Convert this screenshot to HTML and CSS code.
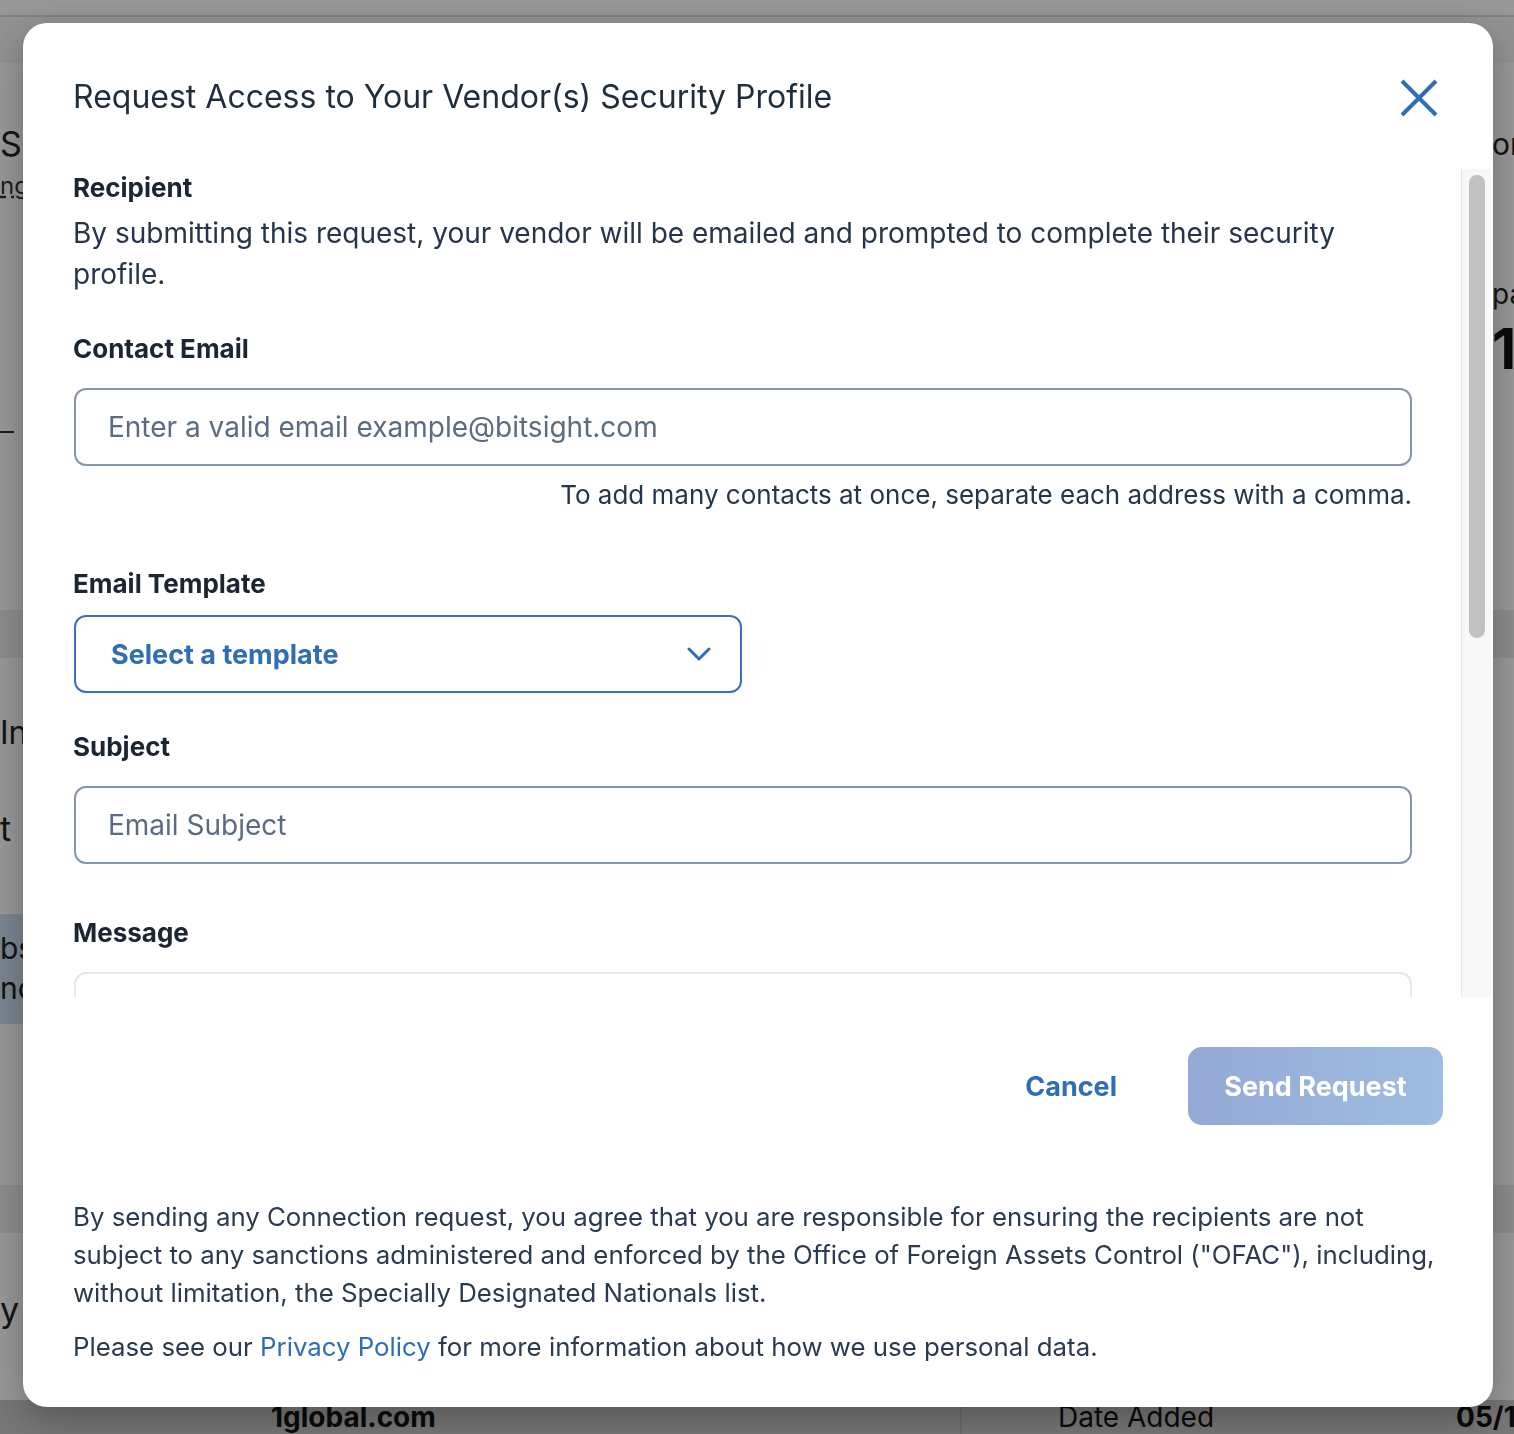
FILE: index.html
```html
<!DOCTYPE html>
<html lang="en">
<head>
    <meta charset="UTF-8">
    <meta name="viewport" content="width=device-width, initial-scale=1.0">
    <title>Request Access</title>
    <link rel="stylesheet" href="styles.css">
</head>
<body>
    <div class="page">
        <div class="topbar"></div>
        <div class="subbar"></div>
        <div class="main">
            <div class="left-col">
                <div class="card card-top">
                    <div class="big">Se</div>
                    <div class="small dotted">ng</div>
                    <div class="rule"></div>
                </div>
                <div class="band"></div>
                <div class="card card-mid">
                    <div class="mid">In</div>
                    <div class="big">t</div>
                    <div class="note">
                        <span>bs</span>
                        <span>nc</span>
                    </div>
                </div>
                <div class="band"></div>
                <div class="card card-low">
                    <div class="big">y</div>
                </div>
            </div>
            <div class="right-col">
                <div class="card card-top">
                    <div class="big">or</div>
                    <div class="mid">pa</div>
                    <div class="huge">1</div>
                </div>
                <div class="band"></div>
                <div class="card card-mid"></div>
                <div class="band"></div>
                <div class="card card-low"></div>
            </div>
        </div>
        <div class="table-row">
            <div class="cell-name">1global.com</div>
            <div class="cell-label">Date Added</div>
            <div class="cell-date">05/1</div>
        </div>
    </div>

    <div class="overlay">
        <div class="modal">
            <div class="modal-header">
                <h1>Request Access to Your Vendor(s) Security Profile</h1>
                <button class="close" type="button" aria-label="Close">
                    <svg width="38" height="38" viewBox="0 0 38 38">
                        <path d="M2 2 L36 36 M36 2 L2 36" stroke="#2f6db5" stroke-width="4" fill="none"/>
                    </svg>
                </button>
            </div>

            <div class="modal-content">
                <div class="modal-body">
                    <h3 class="label">Recipient</h3>
                    <p class="intro">By submitting this request, your vendor will be emailed and prompted to complete their security profile.</p>

                    <h3 class="label gap-lg">Contact Email</h3>
                    <input class="field" type="text" placeholder="Enter a valid email example@bitsight.com">
                    <p class="hint">To add many contacts at once, separate each address with a comma.</p>

                    <h3 class="label gap-hint">Email Template</h3>
                    <button class="select" type="button">
                        <span>Select a template</span>
                        <svg width="24" height="14" viewBox="0 0 24 14">
                            <path d="M2 2 L12 12 L22 2" stroke="#2f6db5" stroke-width="3" fill="none" stroke-linecap="round" stroke-linejoin="round"/>
                        </svg>
                    </button>

                    <h3 class="label gap-lg">Subject</h3>
                    <input class="field" type="text" placeholder="Email Subject">

                    <h3 class="label gap-xl">Message</h3>
                    <textarea class="message"></textarea>
                </div>
                <div class="scrollbar">
                    <div class="thumb"></div>
                </div>
            </div>

            <div class="modal-footer">
                <div class="actions">
                    <button class="cancel" type="button">Cancel</button>
                    <button class="send" type="button">Send Request</button>
                </div>
                <p class="legal">By sending any Connection request, you agree that you are responsible for ensuring the recipients are not subject to any sanctions administered and enforced by the Office of Foreign Assets Control ("OFAC"), including, without limitation, the Specially Designated Nationals list.</p>
                <p class="legal">Please see our <a href="#">Privacy Policy</a> for more information about how we use personal data.</p>
            </div>
        </div>
    </div>
</body>
</html>
```

FILE: styles.css
```css
* {
    margin: 0;
    padding: 0;
    box-sizing: border-box;
}

body {
    width: 1514px;
    height: 1434px;
    overflow: hidden;
    font-family: Inter, "Noto Sans", sans-serif;
    color: #1f2b3a;
    background: #fff;
}

/* page behind the dialog */
.page {
    height: 1434px;
    display: flex;
    flex-direction: column;
    background: #fff;
}
.topbar {
    height: 17px;
    background: #fcfcfc;
    border-bottom: 2px solid #d6d6d6;
}
.subbar {
    height: 46px;
    background: #f4f4f4;
}
.main {
    flex: 1;
    display: flex;
    justify-content: space-between;
}
.left-col,
.right-col {
    width: 24px;
    display: flex;
    flex-direction: column;
    overflow: hidden;
    white-space: nowrap;
}
.right-col {
    width: 22px;
}
.card {
    background: #fff;
}
.card-top {
    height: 547px;
    padding-top: 56px;
}
.card-mid {
    height: 527px;
    padding-top: 50px;
}
.card-low {
    flex: 1;
    padding-top: 52px;
}
.band {
    height: 48px;
    background: #ececec;
}
.big {
    font-size: 34px;
    line-height: 50px;
    color: #222;
}
.mid {
    font-size: 32px;
    line-height: 50px;
    color: #222;
}
.small {
    font-size: 24px;
    line-height: 34px;
    color: #333;
}
.dotted {
    text-decoration: underline dashed;
}
.rule {
    width: 14px;
    height: 2px;
    margin-top: 228px;
    background: #333;
}
.right-col .big {
    font-size: 30px;
}
.right-col .mid {
    margin-top: 100px;
    font-size: 28px;
}
.huge {
    font-size: 56px;
    font-weight: 700;
    line-height: 60px;
    color: #111;
}
.card-mid .big {
    margin-top: 46px;
}
.note {
    margin-top: 60px;
    height: 110px;
    padding: 14px 0;
    display: flex;
    flex-direction: column;
    background: #cce0f2;
    font-size: 30px;
    line-height: 40px;
    color: #222;
}
.table-row {
    height: 34px;
    display: flex;
    align-items: center;
    background: #c7c7c7;
    font-size: 28px;
    color: #111;
}
.cell-name {
    width: 960px;
    padding-left: 271px;
    font-weight: 700;
}
.cell-label {
    flex: 1;
    padding-left: 96px;
    border-left: 2px solid #b5b5b5;
    height: 100%;
    display: flex;
    align-items: center;
}
.cell-date {
    width: 58px;
    font-weight: 700;
}

/* dialog */
.overlay {
    position: fixed;
    inset: 0;
    padding: 23px 21px 27px 23px;
    background: rgba(0, 0, 0, 0.4);
}
.modal {
    height: 100%;
    display: flex;
    flex-direction: column;
    background: #fff;
    border-radius: 24px;
    box-shadow: 0 12px 40px rgba(0, 0, 0, 0.3);
    overflow: hidden;
}
.modal-header {
    height: 146px;
    flex-shrink: 0;
    display: flex;
    justify-content: space-between;
    align-items: flex-start;
    padding: 55px 55px 0 50px;
}
.modal-header h1 {
    font-size: 32px;
    font-weight: 400;
    line-height: 38px;
    color: #1f2d3d;
}
.close {
    border: none;
    background: none;
    padding: 0;
    width: 38px;
    height: 38px;
    margin-top: 1px;
    cursor: pointer;
}

.modal-content {
    height: 828px;
    flex-shrink: 0;
    display: flex;
    margin-right: 2px;
}
.modal-body {
    flex: 1;
    overflow: hidden;
    padding: 2px 49px 0 51px;
}
.scrollbar {
    width: 30px;
    padding: 6px 6px 0 7px;
    background: #f8f8f8;
    border-left: 1px solid #e6e6e6;
}
.thumb {
    height: 463px;
    background: #c1c1c1;
    border-radius: 8px;
}

.label {
    font-size: 26px;
    font-weight: 700;
    line-height: 34px;
    color: #1c2633;
}
.modal-body .label,
.modal-body .intro {
    margin-left: -1px;
}
.gap-lg {
    margin-top: 37px;
}
.gap-hint {
    margin-top: 55px;
}
.gap-xl {
    margin-top: 52px;
}
.intro {
    margin-top: 8px;
    font-size: 28px;
    line-height: 41px;
    color: #26354a;
}
.field {
    display: block;
    width: 100%;
    height: 78px;
    margin-top: 22px;
    padding: 0 32px;
    border: 2px solid #8695aa;
    border-radius: 12px;
    font-family: inherit;
    font-size: 28px;
    color: #26354a;
    outline: none;
}
.field::placeholder {
    color: #5b6b80;
}
.hint {
    margin-top: 12px;
    text-align: right;
    font-size: 26px;
    line-height: 34px;
    color: #26354a;
}
.select {
    width: 668px;
    height: 78px;
    margin-top: 14px;
    display: flex;
    justify-content: space-between;
    align-items: center;
    padding: 0 29px 0 35px;
    background: #fff;
    border: 2px solid #3572bb;
    border-radius: 12px;
    font-family: inherit;
    font-size: 27px;
    font-weight: 700;
    color: #2f6db5;
    cursor: pointer;
}
.message {
    display: block;
    width: 100%;
    height: 600px;
    margin-top: 22px;
    border: 2px solid #e4e8ed;
    border-radius: 12px;
    resize: none;
    outline: none;
}

.modal-footer {
    flex: 1;
    padding: 50px 50px 0 50px;
}
.actions {
    display: flex;
    justify-content: flex-end;
    align-items: center;
    gap: 36px;
}
.cancel {
    padding: 0 35px;
    height: 78px;
    border: none;
    background: none;
    font-family: inherit;
    font-size: 27px;
    font-weight: 700;
    color: #2f6db5;
    cursor: pointer;
}
.send {
    width: 255px;
    height: 78px;
    border: none;
    border-radius: 14px;
    background: linear-gradient(to right, #94a9d6, #9fbde0);
    font-family: inherit;
    font-size: 27px;
    font-weight: 700;
    color: #fff;
}
.legal {
    font-size: 25.8px;
    line-height: 38px;
    color: #2b3a4f;
}
.actions + .legal {
    margin-top: 73px;
}
.legal + .legal {
    margin-top: 16px;
}
.legal a {
    color: #2f6db5;
    text-decoration: none;
}
```
